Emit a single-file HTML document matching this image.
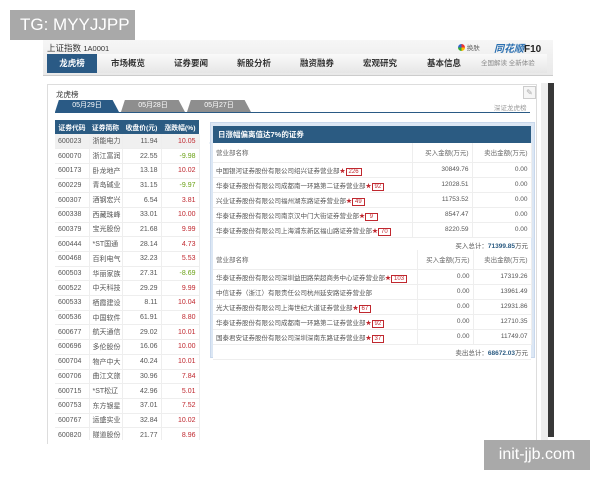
<!DOCTYPE html>
<html><head><meta charset="utf-8"><style>
*{margin:0;padding:0;box-sizing:border-box}
body{width:600px;height:480px;background:#fff;position:relative;overflow:hidden;font-family:"Liberation Sans","Noto Sans CJK SC",sans-serif;font-size:7px;color:#444}
.a{position:absolute}
.tg{left:10px;top:10px;width:125px;height:30px;background:#a9a9a9;color:#fff;font-size:17px;line-height:30px;padding-left:10px}
.wm{left:484px;top:440px;width:106px;height:30px;background:#a9a9a9;color:#fff;font-size:16px;line-height:30px;text-align:center}
.head{left:43px;top:40px;width:510px;height:36px;background:linear-gradient(#f6f6f6,#e9e9e9);border-bottom:1px solid #ccc}
.nav{left:47px;top:54px;width:500px;height:19px;background:linear-gradient(#fafafa,#e6e6e6)}
.nav span{position:absolute;top:0;line-height:19px;font-size:8.5px;color:#333;font-weight:bold}
.act{left:0;width:50px;background:#2a5a85;color:#fff!important;text-align:center}
.panel{left:47px;top:84px;width:490px;height:360px;border:1px solid #ddd;border-bottom:none;background:#fff}
.tab{position:absolute;top:100px;height:12px;line-height:12px;color:#fff;font-size:7px;text-align:center;background:#8e8e8e;clip-path:polygon(0 100%,6% 0,90% 0,100% 100%)}
table{border-collapse:collapse;position:absolute;table-layout:fixed}
td{height:14.7px;border-bottom:1px solid #eee;border-right:1px solid #eee;font-size:7px;color:#555;padding:0 3px;white-space:nowrap;overflow:hidden}
.lt th{background:#2b5b82;color:#fff;height:14px;font-size:6.8px;font-weight:bold;white-space:nowrap}
.r{text-align:right}.red{color:#c0282f}.grn{color:#6aa014}
.rp{left:210px;top:122px;width:325px;height:236px;background:#dce7f4;border:1px solid #c9d8ec}
.rt td{background:#fff;height:15px;font-size:6.5px}
.rt .h td{height:19px;color:#666}
.tag{color:#c0282f;font-size:6px}.tag b{border:1px solid #c0282f;padding:0 2px;font-weight:normal}
</style></head><body>
<div class="a tg">TG: MYYJJPP</div>
<div class="a head"></div>
<div class="a" style="left:47px;top:42px;font-size:8.5px;color:#333">上证指数 <span style="font-size:7.5px">1A0001</span></div>
<div class="a" style="left:458px;top:42px;font-size:6.5px;color:#666"><span style="display:inline-block;width:7px;height:7px;border-radius:50%;background:conic-gradient(#e33 0 25%,#fb0 0 50%,#3a3 0 75%,#36c 0);vertical-align:-1px"></span> 换肤</div>
<div class="a" style="left:494px;top:40px;font-size:10px;font-weight:bold;font-style:italic;color:#2a6fb0">同花顺<span style="color:#222;font-style:normal">F10</span></div>
<div class="a nav">
<span class="act">龙虎榜</span>
<span style="left:64px">市场概览</span><span style="left:127px">证券要闻</span><span style="left:190px">新股分析</span><span style="left:253px">融资融券</span><span style="left:316px">宏观研究</span><span style="left:380px">基本信息</span>
<span style="left:434px;font-size:6.5px;font-weight:normal;color:#888">全国解读 全新体验</span></div>
<div class="a panel"></div>
<div class="a" style="left:548px;top:83px;width:6px;height:354px;background:#383838"></div>
<div class="a" style="left:541px;top:83px;width:7px;height:357px;background:#eee"></div>
<div class="a" style="left:56px;top:89px;font-size:7.5px;color:#333">龙虎榜</div>
<div class="a" style="left:523px;top:86px;width:13px;height:13px;border:1px solid #ccc;background:#f6f6f6;color:#aaa;font-size:8px;text-align:center;line-height:11px">✎</div>
<div class="tab" style="left:55px;width:64px;background:#2a5a85">05月29日</div>
<div class="tab" style="left:121px;width:64px">05月28日</div>
<div class="tab" style="left:187px;width:64px">05月27日</div>
<div class="a" style="left:55px;top:112px;width:475px;height:1px;background:#2a5a85"></div>
<div class="a" style="left:494px;top:102px;font-size:6.5px;color:#999">深证龙虎榜</div>
<table class="lt" style="left:55px;top:120px;width:144px">
<colgroup><col style="width:34px"><col style="width:33px"><col style="width:39px"><col style="width:38px"></colgroup>
<tr><th>证券代码</th><th>证券简称</th><th>收盘价(元)</th><th>涨跌幅(%)</th></tr>
<tr style="background:#f0f0f0"><td>600023</td><td>浙能电力</td><td class="r">11.94</td><td class="r red">10.05</td></tr>
<tr><td>600070</td><td>浙江富润</td><td class="r">22.55</td><td class="r grn">-9.98</td></tr>
<tr><td>600173</td><td>卧龙地产</td><td class="r">13.18</td><td class="r red">10.02</td></tr>
<tr><td>600229</td><td>青岛碱业</td><td class="r">31.15</td><td class="r grn">-9.97</td></tr>
<tr><td>600307</td><td>酒钢宏兴</td><td class="r">6.54</td><td class="r red">3.81</td></tr>
<tr><td>600338</td><td>西藏珠峰</td><td class="r">33.01</td><td class="r red">10.00</td></tr>
<tr><td>600379</td><td>宝光股份</td><td class="r">21.68</td><td class="r red">9.99</td></tr>
<tr><td>600444</td><td>*ST国通</td><td class="r">28.14</td><td class="r red">4.73</td></tr>
<tr><td>600468</td><td>百利电气</td><td class="r">32.23</td><td class="r red">5.53</td></tr>
<tr><td>600503</td><td>华丽家族</td><td class="r">27.31</td><td class="r grn">-8.69</td></tr>
<tr><td>600522</td><td>中天科技</td><td class="r">29.29</td><td class="r red">9.99</td></tr>
<tr><td>600533</td><td>栖霞建设</td><td class="r">8.11</td><td class="r red">10.04</td></tr>
<tr><td>600536</td><td>中国软件</td><td class="r">61.91</td><td class="r red">8.80</td></tr>
<tr><td>600677</td><td>航天通信</td><td class="r">29.02</td><td class="r red">10.01</td></tr>
<tr><td>600696</td><td>多伦股份</td><td class="r">16.06</td><td class="r red">10.00</td></tr>
<tr><td>600704</td><td>物产中大</td><td class="r">40.24</td><td class="r red">10.01</td></tr>
<tr><td>600706</td><td>曲江文旅</td><td class="r">30.96</td><td class="r red">7.84</td></tr>
<tr><td>600715</td><td>*ST松辽</td><td class="r">42.96</td><td class="r red">5.01</td></tr>
<tr><td>600753</td><td>东方银星</td><td class="r">37.01</td><td class="r red">7.52</td></tr>
<tr><td>600767</td><td>运盛实业</td><td class="r">32.84</td><td class="r red">10.02</td></tr>
<tr><td>600820</td><td>隧道股份</td><td class="r">21.77</td><td class="r red">8.96</td></tr>
</table>
<div class="a" style="left:55px;top:440px;width:150px;height:40px;background:#fff"></div>
<div class="a" style="left:203px;top:137px;width:0;height:0;border:6px solid transparent;border-right-color:#dce7f4"></div>
<div class="a rp"></div>
<div class="a" style="left:213px;top:126px;width:318px;height:17px;background:#2b5b82;color:#fff;font-size:7.5px;font-weight:bold;line-height:17px;padding-left:5px">日涨幅偏离值达7%的证券</div>
<table class="rt" style="left:213px;top:143px;width:318px">
<colgroup><col style="width:199px"><col style="width:60px"><col style="width:59px"></colgroup>
<tr class="h"><td>营业部名称</td><td class="r">买入金额(万元)</td><td class="r">卖出金额(万元)</td></tr>
<tr><td>中国银河证券股份有限公司绍兴证券营业部<span class="tag">★<b>226</b></span></td><td class="r">30849.76</td><td class="r">0.00</td></tr>
<tr><td>华泰证券股份有限公司成都南一环路第二证券营业部<span class="tag">★<b>92</b></span></td><td class="r">12028.51</td><td class="r">0.00</td></tr>
<tr><td>兴业证券股份有限公司福州湖东路证券营业部<span class="tag">★<b>49</b></span></td><td class="r">11753.52</td><td class="r">0.00</td></tr>
<tr><td>华泰证券股份有限公司南京汉中门大街证券营业部<span class="tag">★<b>&nbsp;9&nbsp;</b></span></td><td class="r">8547.47</td><td class="r">0.00</td></tr>
<tr><td>华泰证券股份有限公司上海浦东新区福山路证券营业部<span class="tag">★<b>70</b></span></td><td class="r">8220.59</td><td class="r">0.00</td></tr>
<tr><td colspan="3" class="r" style="border-right:none">买入总计：<b style="color:#2b5b82">71399.85</b>万元</td></tr>
</table>
<table class="rt" style="left:213px;top:250px;width:318px">
<colgroup><col style="width:204px"><col style="width:56px"><col style="width:58px"></colgroup>
<tr class="h"><td>营业部名称</td><td class="r">买入金额(万元)</td><td class="r">卖出金额(万元)</td></tr>
<tr><td>华泰证券股份有限公司深圳益田路荣超商务中心证券营业部<span class="tag">★<b>103</b></span></td><td class="r">0.00</td><td class="r">17319.26</td></tr>
<tr><td>中信证券（浙江）有限责任公司杭州延安路证券营业部</td><td class="r">0.00</td><td class="r">13961.49</td></tr>
<tr><td>光大证券股份有限公司上海世纪大道证券营业部<span class="tag">★<b>67</b></span></td><td class="r">0.00</td><td class="r">12931.86</td></tr>
<tr><td>华泰证券股份有限公司成都南一环路第二证券营业部<span class="tag">★<b>92</b></span></td><td class="r">0.00</td><td class="r">12710.35</td></tr>
<tr><td>国泰君安证券股份有限公司深圳深南东路证券营业部<span class="tag">★<b>37</b></span></td><td class="r">0.00</td><td class="r">11749.07</td></tr>
<tr><td colspan="3" class="r" style="border-right:none">卖出总计：<b style="color:#2b5b82">68672.03</b>万元</td></tr>
</table>
<div class="a wm">init-jjb.com</div>
</body></html>
